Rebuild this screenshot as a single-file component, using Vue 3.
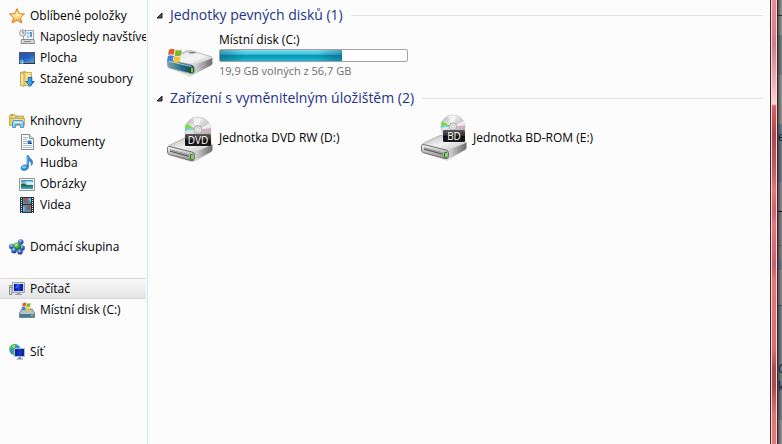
<template>
  <div class="window">
    <svg class="sprite" aria-hidden="true">
      <defs>
        <linearGradient id="gold" x1="0" y1="0" x2="0" y2="1">
          <stop offset="0" stop-color="#ffd66a" />
          <stop offset="0.5" stop-color="#ffe9a0" />
          <stop offset="1" stop-color="#f79a22" />
        </linearGradient>
        <linearGradient id="folder" x1="0" y1="0" x2="1" y2="0">
          <stop offset="0" stop-color="#e3c25c" />
          <stop offset="0.5" stop-color="#faeaa4" />
          <stop offset="1" stop-color="#ecd27a" />
        </linearGradient>
        <linearGradient id="blue" x1="0" y1="0" x2="1" y2="1">
          <stop offset="0" stop-color="#1b3d8c" />
          <stop offset="0.6" stop-color="#2c6bc4" />
          <stop offset="1" stop-color="#4aa5ea" />
        </linearGradient>
        <linearGradient id="sky" x1="0" y1="0" x2="0" y2="1">
          <stop offset="0" stop-color="#3b86cf" />
          <stop offset="0.5" stop-color="#b5e8f7" />
          <stop offset="0.6" stop-color="#2a7c66" />
          <stop offset="1" stop-color="#3fa9c4" />
        </linearGradient>
        <linearGradient id="screen" x1="0" y1="0" x2="1" y2="0">
          <stop offset="0" stop-color="#0716a0" />
          <stop offset="0.5" stop-color="#1638e0" />
          <stop offset="1" stop-color="#0a1a90" />
        </linearGradient>
        <linearGradient id="arrow" x1="0" y1="0" x2="1" y2="0">
          <stop offset="0" stop-color="#5cc4f7" />
          <stop offset="1" stop-color="#1a7fd6" />
        </linearGradient>
        <radialGradient id="ballBlue" cx="0.4" cy="0.3" r="0.7">
          <stop offset="0" stop-color="#b9d2ff" />
          <stop offset="0.5" stop-color="#3f68cf" />
          <stop offset="1" stop-color="#14307f" />
        </radialGradient>
        <radialGradient id="ballGreen" cx="0.4" cy="0.3" r="0.7">
          <stop offset="0" stop-color="#c4f5b0" />
          <stop offset="0.5" stop-color="#38a838" />
          <stop offset="1" stop-color="#11631f" />
        </radialGradient>
        <linearGradient id="metalTop" x1="0" y1="0" x2="1" y2="1">
          <stop offset="0" stop-color="#b4b4b4" />
          <stop offset="0.5" stop-color="#f1f1f1" />
          <stop offset="1" stop-color="#bdbdbd" />
        </linearGradient>
        <linearGradient id="metalFront" x1="0" y1="0" x2="0" y2="1">
          <stop offset="0" stop-color="#f4f4f4" />
          <stop offset="1" stop-color="#8c8c8c" />
        </linearGradient>
        <linearGradient id="metalSide" x1="0" y1="0" x2="1" y2="0">
          <stop offset="0" stop-color="#d8d8d8" />
          <stop offset="1" stop-color="#6c6c6c" />
        </linearGradient>
        <linearGradient id="teal" x1="0" y1="0" x2="1" y2="0">
          <stop offset="0" stop-color="#7fa3b0" />
          <stop offset="0.5" stop-color="#27718c" />
          <stop offset="1" stop-color="#123f55" />
        </linearGradient>
        <linearGradient id="silver" x1="0" y1="0" x2="1" y2="1">
          <stop offset="0" stop-color="#a5a5a5" />
          <stop offset="0.35" stop-color="#e9e9e9" />
          <stop offset="0.6" stop-color="#c3c3c3" />
          <stop offset="1" stop-color="#9c9c9c" />
        </linearGradient>
      </defs>

      <symbol id="star" viewBox="0 0 16 16">
        <path d="M8 .7 10.1 5.6 15.5 6 11.4 9.6 12.8 15 8 12.1 3.2 15 4.6 9.6.5 6 5.9 5.6Z" fill="url(#gold)" stroke="#d9791c" stroke-linejoin="round" />
        <path d="M8 3 9.2 6.4 12.8 6.9 8 8Z" fill="#fff5c8" />
      </symbol>

      <symbol id="recent" viewBox="0 0 16 16">
        <path d="M4.5 1.5H14.5V10.5H4.5Z" fill="#f2f5f7" stroke="#9aa1a8" />
        <path d="M8 3H13V5H8ZM8 6H10V9H8Z" fill="#a9c9e2" />
        <path d="M11 3H13V8H11Z" fill="#5c9bd0" />
        <path d="M2.5 10.5H15L15.5 14.5H2Z" fill="#d7dadc" stroke="#898e92" />
        <path d="M5 12H12V13H5Z" fill="#83898d" />
        <circle cx="3.8" cy="4" r="3.2" fill="#eef3f6" stroke="#8f979d" />
        <path d="M3.8 2V4.2H5.6" fill="none" stroke="#4c6d86" />
      </symbol>

      <symbol id="desktop" viewBox="0 0 16 16">
        <path d="M0 2H16V14H0Z" fill="#4d596b" />
        <path d="M1 3H15V12H1Z" fill="url(#blue)" />
        <path d="M1 3H15V5L1 11Z" fill="#2a5db7" opacity="0.7" />
        <path d="M0 12H16V14H0Z" fill="#2b3542" />
        <path d="M4 12H15V13H4Z" fill="#74839b" />
        <circle cx="2.8" cy="11.8" r="2.2" fill="#49b5ed" />
        <path d="M2 11H3V12H2Z" fill="#f0592b" />
        <path d="M3 12H4V13H3Z" fill="#fff" />
      </symbol>

      <symbol id="downloads" viewBox="0 0 16 16">
        <path d="M1.5 1.5 6.5.5V13.5L1.5 14.5Z" fill="#e7cd72" stroke="#c9a546" />
        <path d="M4.5 1.5H12.5V14.5H4.5Z" fill="url(#folder)" stroke="#cdae50" />
        <path d="M1.5 1.5 5 3V15.5L1.5 14Z" fill="#f8e69a" stroke="#c9a546" />
        <path d="M9.2 6.5H12.8V10.5H15.2L11 15.4 6.8 10.5H9.2Z" fill="url(#arrow)" stroke="#1768b2" />
      </symbol>

      <symbol id="libraries" viewBox="0 0 16 16">
        <path d="M.5 2.5 2 1.5H6L7.5 3H14.5V5H.5Z" fill="#f6db7b" stroke="#c9a94f" />
        <path d="M2 2H4V3H2Z" fill="#4cb84c" />
        <path d="M6 3H9V4H6Z" fill="#5bb5ea" />
        <path d="M.5 5.5H15.5V12.5H.5Z" fill="url(#folder)" stroke="#cfae56" />
        <path d="M3.5 14.5V9.5Q3.5 7.5 5.5 7.5H12Q14.5 7.5 14.5 9.5V14.5H11.5V11.5H6.5V14.5Z" fill="#8fd0f0" stroke="#4a9bcb" />
        <path d="M5 8.5H13V10H5Z" fill="#d2f0fc" />
      </symbol>

      <symbol id="documents" viewBox="0 0 16 16">
        <path d="M2.5.5H10.5L14.5 4.5V15.5H2.5Z" fill="#fff" stroke="#858b91" />
        <path d="M10.5.5V4.5H14.5" fill="#dde3e8" stroke="#858b91" />
        <path d="M4 3.5H9M4 5.5H8M4 7.5H8M4 9.5H8M4 11.5H13M4 13.5H13" stroke="#a6bac9" />
        <path d="M8.5 6.5H12.5V9.5H8.5Z" fill="#2f79c6" />
        <path d="M9 9H13V10H9Z" fill="#1d4b88" />
      </symbol>

      <symbol id="music" viewBox="0 0 16 16">
        <path d="M8 .5H9.5C10 3.5 14.5 4.5 13.5 8.5Q13.2 9.8 12.2 10.6C13 7.8 11.5 6.6 9.5 6V12C9.5 14 7.5 15.4 5 15.4 3 15.4 1.8 14.4 2 12.9 2.2 11.2 4 10 6 10Q7.2 10 8 10.4Z" fill="#2c8bd9" stroke="#1c6cb4" stroke-width="0.6" />
        <ellipse cx="5" cy="12.2" rx="2" ry="1.2" fill="#86cdf7" />
        <path d="M8.8 1.5V9" stroke="#7cc6f4" stroke-width="0.8" />
      </symbol>

      <symbol id="pictures" viewBox="0 0 16 16">
        <path d="M.5 2.5H15.5V14.5H.5Z" fill="#fff" stroke="#8f959b" />
        <path d="M2 4H14V13H2Z" fill="url(#sky)" />
        <path d="M2 8Q5 6.8 8 9T14 9V10.3H2Z" fill="#246a55" />
        <path d="M6 6Q9 4.5 14 6V8H9Z" fill="#e2f8fd" opacity="0.8" />
      </symbol>

      <symbol id="videos" viewBox="0 0 16 16">
        <path d="M1 0H15V16H1Z" fill="#28333b" />
        <path d="M4 1H12V7H4ZM4 8H12V15H4Z" fill="#4b91c4" />
        <path d="M5 1H9L8 4 11 6H5ZM7 9 11 8 12 12 8 14Z" fill="#a65949" />
        <path d="M9 2 12 1V5ZM4 9 6 11 5 14H4Z" fill="#6fc4ed" />
        <path d="M2.5 1V16M13.5 1V16" stroke="#e4eaee" stroke-dasharray="1 1" />
      </symbol>

      <symbol id="homegroup" viewBox="0 0 16 16">
        <circle cx="11.7" cy="3" r="2.8" fill="url(#ballBlue)" />
        <circle cx="2.8" cy="7.5" r="2.8" fill="url(#ballBlue)" />
        <circle cx="13" cy="9" r="2.8" fill="url(#ballBlue)" />
        <circle cx="8" cy="7.5" r="4.1" fill="url(#ballGreen)" />
        <circle cx="5" cy="11.4" r="2.8" fill="url(#ballBlue)" />
        <circle cx="11" cy="12.8" r="2.8" fill="url(#ballBlue)" />
      </symbol>

      <symbol id="computer" viewBox="0 0 16 16">
        <path d="M.5 4.5H3V13.5H.5Z" fill="#d8dddf" stroke="#858c91" />
        <path d="M1 6H3V7H1Z" fill="#55b84e" />
        <path d="M3.5 1.5H15.5V11.5H3.5Z" fill="#d9dcdf" stroke="#9da3a9" />
        <path d="M5 3H14V10H5Z" fill="url(#screen)" />
        <path d="M8 3H11L9 7H6Z" fill="#5375ff" opacity="0.6" />
        <path d="M8 12H11V13H13V14H6V13H8Z" fill="#9a9fa5" />
      </symbol>

      <symbol id="flag" viewBox="0 0 16 16">
        <path d="M2 1.8Q5-.2 7.6 1.4L6.7 7Q4 5.6 1 7.3Z" fill="#ea5a24" />
        <path d="M8.6 1.8Q11.5 3.2 14.8 1.6L13.8 7.2Q10.8 8.8 7.7 7.4Z" fill="#79b72e" />
        <path d="M.8 8.3Q3.8 6.6 6.5 8L5.6 13.6Q3 12-.1 13.8Z" fill="#3a86dd" />
        <path d="M7.5 8.4Q10.5 9.8 13.6 8.2L12.6 14Q9.6 15.4 6.6 14Z" fill="#fbc02c" />
      </symbol>

      <symbol id="systemDisk" viewBox="0 0 16 16">
        <path d="M3 7H13L15.5 11V15.5H.5V11Z" fill="#b9bfc3" stroke="#7c8488" />
        <path d="M1 11H15V15H1Z" fill="#427e94" />
        <path d="M1 11H15V12H1Z" fill="#b7c9cf" />
        <path d="M12 13H14V14H12Z" fill="#8ff04b" />
        <use href="#flag" x="2" y="0" width="11" height="10" />
      </symbol>

      <symbol id="network" viewBox="0 0 16 16">
        <circle cx="5.8" cy="5.5" r="5.5" fill="#2f8fdc" />
        <path d="M2 2Q5-.6 8 .8L6 4 3 5.5 1 7Q0 4 2 2ZM5 6 8 7 6 10.8 3 10Z" fill="#4fb843" />
        <path d="M3 2 6 1 5 4Z" fill="#c7f3c0" />
        <path d="M5.5 4.5H15.5V12.5H5.5Z" fill="#22308a" stroke="#b3bccc" />
        <path d="M6.5 5.5H14.5V11.5H6.5Z" fill="url(#screen)" />
        <path d="M9.5 13H12V14.5H14V15.5H7.5V14.5H9.5Z" fill="#7f8c9c" />
      </symbol>

      <symbol id="hardDrive" viewBox="0 0 48 48">
        <path d="M3 37 24 46 47 33 44 28Z" fill="#000" opacity="0.12" />
        <path d="M2 29.5Q2 28 4 27L20 20Q22 19.2 25 19.6L45 25.5Q46.5 26 46.3 28L28 35Q25 35.5 23 35L2 29.5Z" fill="url(#metalTop)" stroke="#a0a0a0" stroke-width="0.6" />
        <path d="M7 27.5 23 20.7 41 25.8 25 32.5Z" fill="#f3f3f3" opacity="0.7" />
        <ellipse cx="26" cy="21.6" rx="3.6" ry="0.9" fill="#555" opacity="0.7" />
        <path d="M28 34.5 46.3 27.3V32.5Q46 34 44 35L28 43Z" fill="url(#metalSide)" />
        <path d="M1.5 29.3Q2 28.3 4 29L25.5 34Q28.3 34.6 28.3 37V40.5Q28 43.4 25 42.6L3.5 37Q1.5 36.2 1.5 34.2Z" fill="url(#teal)" stroke="#8d9ca2" stroke-width="0.8" />
        <path d="M3 30.3 24 35.2Q26.5 36 26.5 38" fill="none" stroke="#d0dce0" stroke-width="0.8" />
        <path d="M24 36.7H27V42H24Z" fill="#15420d" />
        <path d="M25 37H27V41.6H25Z" fill="#68e02d" />
        <use href="#flag" x="1" y="17" width="16" height="16" />
      </symbol>

      <symbol id="disc" viewBox="0 0 28 28">
        <circle cx="14" cy="14" r="13" fill="url(#silver)" stroke="#b3b3b3" stroke-width="0.6" />
        <path d="M14 14 8.5 2.5A13 13 0 0 1 17 1.5Z" fill="#fff" opacity="0.6" />
        <path d="M13 13.5 2 8Q1.3 9.5 1.2 11.5Z" fill="#6ce331" />
        <path d="M13 13.5 1.2 11.5V14.5Z" fill="#47c9c9" opacity="0.7" />
        <path d="M15 13.5 27 12.5V18.5Z" fill="#dba6c8" opacity="0.6" />
        <path d="M15 13.5 25.5 7 27 12Z" fill="#fff" opacity="0.7" />
        <circle cx="14" cy="13.5" r="4" fill="#e4e4e4" stroke="#a8a8a8" />
        <circle cx="14" cy="13.5" r="1.6" fill="#fff" stroke="#999" stroke-width="0.5" />
      </symbol>

      <symbol id="tray" viewBox="0 0 48 28">
        <path d="M3 20 27 28 47 16 45 13Z" fill="#000" opacity="0.12" />
        <path d="M2 12.5Q2 11 4 10L20 2.5Q22 1.8 25 2.5L45 8.5Q46.5 9 46 10.5L28 18Z" fill="url(#metalTop)" stroke="#929292" stroke-width="0.6" />
        <path d="M28 17.5 46.5 9.7V14.5Q46.3 16.2 44.5 17.2L28 26Z" fill="url(#metalSide)" />
        <path d="M1.5 12.3Q2 11 4 11.6L26 17Q28.5 17.5 28.5 20V23.5Q28 26.4 25 25.6L3.5 19.7Q1.5 19 1.5 17Z" fill="url(#metalFront)" stroke="#666" stroke-width="0.9" />
        <path d="M4 14.6 22.5 19.4V21.8L4 16.8Z" fill="#5c5c5c" />
        <path d="M4 15.2 22 19.9" stroke="#c8c8c8" stroke-width="0.7" />
        <path d="M24.2 19.3H27V24.4H24.2Z" fill="#1d5c10" />
        <path d="M25 20H27V24H25Z" fill="#70e82c" />
      </symbol>

      <symbol id="dvdDrive" viewBox="0 0 48 48">
        <use href="#disc" x="18" y="2" width="28" height="28" />
        <use href="#tray" x="0" y="21" width="48" height="28" />
      </symbol>

      <symbol id="bdDrive" viewBox="0 0 48 48">
        <use href="#disc" x="20" y="0" width="26" height="26" />
        <use href="#tray" x="0" y="19" width="48" height="28" />
      </symbol>
    </svg>

    <nav class="sidebar" aria-label="Navigace">
      <ul v-for="(group, index) in groups" :key="index" class="group">
        <li v-for="item in group" :key="item.label">
          <a
              href="#"
              class="nav-item"
              :class="{ child: item.child, selected: selected === item.label }"
              @click.prevent="selected = item.label"
          >
            <svg class="nav-icon" aria-hidden="true"><use :href="'#' + item.icon" /></svg>
            <span>{{ item.label }}</span>
          </a>
        </li>
      </ul>
    </nav>

    <main class="content">
      <section v-for="section in sections" :key="section.title" class="section">
        <h2 class="section-title">
          <button type="button" :aria-expanded="section.open" @click="section.open = !section.open">
            <svg class="toggle" viewBox="0 0 7 7" aria-hidden="true">
              <path d="M6 1V6H1Z" fill="#555" stroke="#222" />
            </svg>
            <span>{{ section.title }} ({{ section.drives.length }})</span>
          </button>
        </h2>
        <div v-if="section.open" class="drives">
          <a v-for="drive in section.drives" :key="drive.name" href="#" class="drive" @click.prevent>
            <span class="drive-icon">
              <svg aria-hidden="true"><use :href="'#' + drive.icon" /></svg>
              <span v-if="drive.badge" class="badge" :class="drive.icon">{{ drive.badge }}</span>
            </span>
            <span class="drive-info">
              <span>{{ drive.name }}</span>
              <template v-if="drive.total">
                <span
                    class="usage"
                    role="meter"
                    :aria-label="drive.name"
                    aria-valuemin="0"
                    aria-valuemax="100"
                    :aria-valuenow="usedPercent(drive)"
                >
                  <span class="usage-fill" :style="{ width: usedPercent(drive) + '%' }"></span>
                </span>
                <span class="space">{{ format(drive.free) }} GB volných z {{ format(drive.total) }} GB</span>
              </template>
            </span>
          </a>
        </div>
      </section>
    </main>

    <div class="frame"></div>
    <div class="behind" aria-hidden="true">
      <span class="letter first">e</span>
      <span class="letter second">C</span>
      <span class="letter third">k</span>
    </div>
  </div>
</template>

<script setup>
import { ref } from 'vue'

const selected = ref('Počítač')

const groups = [
  [
    { label: 'Oblíbené položky', icon: 'star' },
    { label: 'Naposledy navštívené', icon: 'recent', child: true },
    { label: 'Plocha', icon: 'desktop', child: true },
    { label: 'Stažené soubory', icon: 'downloads', child: true },
  ],
  [
    { label: 'Knihovny', icon: 'libraries' },
    { label: 'Dokumenty', icon: 'documents', child: true },
    { label: 'Hudba', icon: 'music', child: true },
    { label: 'Obrázky', icon: 'pictures', child: true },
    { label: 'Videa', icon: 'videos', child: true },
  ],
  [{ label: 'Domácí skupina', icon: 'homegroup' }],
  [
    { label: 'Počítač', icon: 'computer' },
    { label: 'Místní disk (C:)', icon: 'systemDisk', child: true },
  ],
  [{ label: 'Síť', icon: 'network' }],
]

const sections = ref([
  {
    title: 'Jednotky pevných disků',
    open: true,
    drives: [{ name: 'Místní disk (C:)', icon: 'hardDrive', free: 19.9, total: 56.7 }],
  },
  {
    title: 'Zařízení s vyměnitelným úložištěm',
    open: true,
    drives: [
      { name: 'Jednotka DVD RW (D:)', icon: 'dvdDrive', badge: 'DVD' },
      { name: 'Jednotka BD-ROM (E:)', icon: 'bdDrive', badge: 'BD' },
    ],
  },
])

const usedPercent = (drive) => Math.round((1 - drive.free / drive.total) * 100)

const format = (value) => value.toFixed(1).replace('.', ',')
</script>

<style>
body {
  margin: 0;
}
</style>

<style scoped>
.window {
  display: flex;
  min-height: 100vh;
  background: #fcfcfc;
  color: #000;
  font-family: 'Open Sans', 'Noto Sans', sans-serif;
  font-size: 12px;
  line-height: 16px;
  overflow: hidden;
}

.sprite {
  position: absolute;
  width: 0;
  height: 0;
}

.sidebar {
  flex: none;
  box-sizing: border-box;
  width: 148px;
  padding: 5px 1px 0 0;
  border-right: 1px solid #d6e5f5;
}

.group {
  margin: 0 0 21px;
  padding: 0;
  list-style: none;
}

.nav-item {
  display: flex;
  align-items: center;
  gap: 5px;
  box-sizing: border-box;
  height: 21px;
  padding-left: 9px;
  border: solid transparent;
  border-width: 1px 0;
  color: inherit;
  text-decoration: none;
  white-space: nowrap;
  overflow: hidden;
}

.nav-item.child {
  padding-left: 19px;
}

.nav-item.selected {
  border-color: #d9d9d9;
  background: linear-gradient(#f8f8f8, #e5e5e5);
}

.nav-icon {
  flex: none;
  width: 16px;
  height: 16px;
}

.content {
  flex: 1;
  min-width: 0;
  padding: 4px 7px 0 8px;
}

.section {
  margin-bottom: 6px;
}

.section-title {
  display: flex;
  align-items: center;
  gap: 8px;
  margin: 0;
  font-size: 14px;
  font-weight: normal;
  line-height: 22px;
}

.section-title::after {
  content: '';
  flex: 1;
  height: 1px;
  background: #e2e2e2;
}

.section-title button {
  display: flex;
  align-items: center;
  gap: 7px;
  padding: 0;
  border: 0;
  background: none;
  color: #1e3287;
  font: inherit;
  white-space: nowrap;
}

.toggle {
  width: 7px;
  height: 7px;
}

.drives {
  display: flex;
  flex-wrap: wrap;
  gap: 6px;
  padding: 3px 0 0 10px;
}

.drive {
  display: flex;
  align-items: center;
  gap: 5px;
  width: 248px;
  height: 52px;
  color: inherit;
  text-decoration: none;
  white-space: nowrap;
}

.drive-icon {
  position: relative;
  flex: none;
  width: 48px;
  height: 48px;
}

.drive-icon svg {
  display: block;
  width: 48px;
  height: 48px;
  overflow: visible;
}

.badge {
  position: absolute;
  top: 20px;
  left: 19px;
  width: 26px;
  border-radius: 1px;
  background: linear-gradient(#5a5a5a, #303030 45%, #0c0c0c 50%, #1c1c1c);
  color: #fff;
  font-size: 10px;
  line-height: 12px;
  text-align: center;
}

.badge.bdDrive {
  top: 16px;
  left: 23px;
  width: 22px;
}

.drive-info {
  display: flex;
  flex-direction: column;
  flex: 1;
}

.usage {
  box-sizing: border-box;
  width: 189px;
  height: 13px;
  margin: 1px 0;
  border: 1px solid #a3a3a3;
  border-radius: 2px;
  background: #fff;
}

.usage-fill {
  display: block;
  height: 100%;
  background:
    linear-gradient(90deg, rgba(0, 60, 90, 0.35), transparent 20%, transparent 80%, rgba(0, 60, 90, 0.35)),
    linear-gradient(#7fdcee, #3cbdd8 40%, #0595b3 50%, #10a5c2 75%, #22b6d2);
}

.space {
  color: #6d6d6d;
  font-size: 11px;
}

.frame {
  flex: none;
  box-sizing: border-box;
  width: 8px;
  border: solid #4b1a1e;
  border-width: 0 1px;
  background: linear-gradient(#ea8e90, #cc8085 45px, #f7d4d5 104px, #dc5f64 106px, #a94850 136px, #c95f6a 175px, #e4777b 190px, #cb636b 211px, #e4777b 225px, #c9606a 266px, #e4777b 282px, #dc6c70 350px, #aa4b52 370px, #ad4b50 387px, #e07478 415px, #e4777b);
  box-shadow: inset 1px 0 #fbe2e2, inset -1px 0 #fbe2e2;
}

.behind {
  position: relative;
  flex: none;
  width: 4px;
  background:
    linear-gradient(90deg, rgba(0, 0, 0, 0.45), transparent),
    linear-gradient(#999 15px, #333 15px 16px, #999 16px 35px, #7d878d 35px 75px, #999 75px 124px, #71838f 124px 182px, #909090 182px 211px, #111 211px 212px, #87898b 212px 245px, #6c7175 245px 246px, #87898b 246px 261px, #71838f 261px 270px, #919191 270px 305px, #555 305px 306px, #7d878d 306px 420px, #999 420px);
  overflow: hidden;
}

.letter {
  position: absolute;
  left: 0;
  color: #14213f;
}

.letter.first {
  top: 129px;
}

.letter.second {
  top: 361px;
}

.letter.third {
  top: 379px;
}
</style>
